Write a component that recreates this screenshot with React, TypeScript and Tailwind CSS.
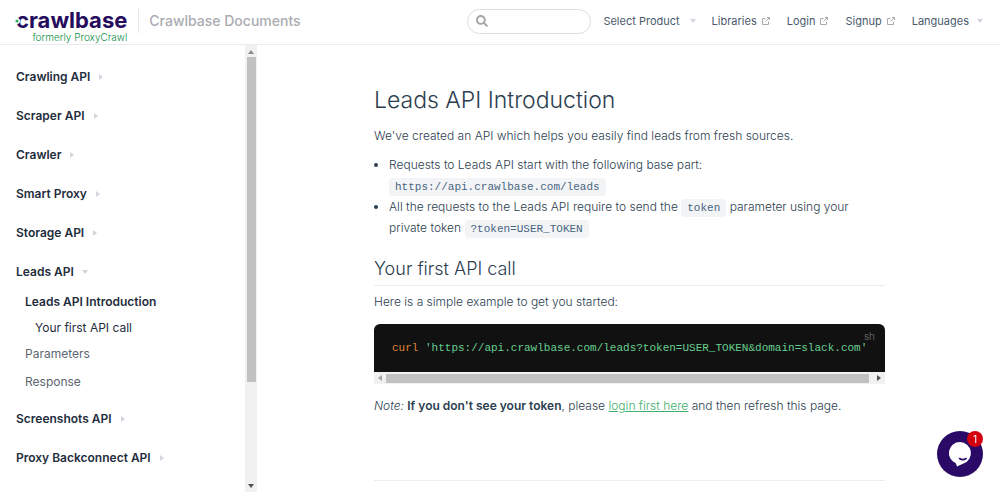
import { FaSearch } from 'react-icons/fa';

interface SidebarItem {
    title: string;
    open?: boolean;
}

const sidebarItems: SidebarItem[] = [
    { title: 'Crawling API' },
    { title: 'Scraper API' },
    { title: 'Crawler' },
    { title: 'Smart Proxy' },
    { title: 'Storage API' },
    { title: 'Leads API', open: true },
    { title: 'Screenshots API' },
    { title: 'Proxy Backconnect API' },
];

const navLinks = ['Libraries', 'Login', 'Signup'];

function Arrow({ direction, className }: { direction: 'up' | 'down' | 'left' | 'right'; className: string }) {
    const points = {
        up: '0,6 3,2 6,6',
        down: '0,1 6,1 3,5',
        left: '5,0 5,6 1,3',
        right: '1,0 1,6 5,3',
    };

    return (
        <svg viewBox="0 0 6 6" className={`w-1.5 h-1.5 shrink-0 ${className}`} fill="currentColor" aria-hidden="true">
            <polygon points={points[direction]} />
        </svg>
    );
}

function OutboundIcon() {
    return (
        <svg viewBox="0 0 10 10" className="w-2.5 h-2.5 shrink-0 text-[#aaaaaa]" fill="none" stroke="currentColor" aria-hidden="true">
            <path d="M4.500 2.500h-3v6h6v-3" />
            <path d="M6 1.500h2.500V4M8.500 1.500L4.500 5.500" />
        </svg>
    );
}

function Logo() {
    return (
        <a href="#home" className="flex flex-col items-end mt-[9px]">
            <span className="relative text-[22px] leading-5 font-bold text-[#260c5c]">
                crawlbase
                <svg viewBox="0 0 6 6" className="absolute -left-0.5 top-2 w-1.5 h-1.5" aria-hidden="true">
                    <circle cx="3" cy="3" r="3" fill="#fff" />
                    <circle cx="3" cy="3" r="1.6" fill="#2fae60" />
                </svg>
            </span>
            <span className="text-[10px] leading-[14px] font-light text-[#0f8f4a]">formerly ProxyCrawl</span>
        </a>
    );
}

function Header() {
    return (
        <header className="flex items-center h-[45px] shrink-0 pl-4 pr-[17px] border-b border-[#eaecef]">
            <Logo />
            <a href="#docs" className="ml-[11px] mb-0.5 pl-2.5 border-l border-gray-200 text-sm leading-6 font-medium text-[#aaacb2]">
                Crawlbase Documents
            </a>
            <div className="flex items-center gap-4 ml-auto mb-0.5 text-[11px] text-[#4b5a6c]">
                <label className="flex items-center w-[124px] h-[25px] -mr-1 px-2 rounded-full border border-[#dcdfe3]">
                    <FaSearch className="w-3 h-3 shrink-0 text-[#a6a6a6]" />
                    <input type="text" aria-label="Search" className="w-full min-w-0 pl-2 outline-none" />
                </label>
                <button type="button" className="flex items-center gap-2.5">
                    Select Product
                    <Arrow direction="down" className="text-gray-300" />
                </button>
                {navLinks.map(link => (
                    <a key={link} href={`#${link.toLowerCase()}`} className="flex items-center gap-1">
                        {link}
                        <OutboundIcon />
                    </a>
                ))}
                <button type="button" className="flex items-center gap-2">
                    Languages
                    <Arrow direction="down" className="text-gray-300" />
                </button>
            </div>
        </header>
    );
}

function Sidebar() {
    return (
        <aside className="flex w-[257px] shrink-0">
            <nav className="flex-1 overflow-hidden pt-3 pl-4 text-xs text-[#1f2d3d]">
                <ul>
                    {sidebarItems.map(item => (
                        <li key={item.title}>
                            <button type="button" className="flex items-center gap-2 h-[39px] font-semibold">
                                {item.title}
                                <Arrow direction={item.open ? 'down' : 'right'} className="text-gray-300" />
                            </button>
                            {item.open && (
                                <ul className="-mt-[3px] mb-[3px] pl-[9px]">
                                    <li>
                                        <a href="#introduction" className="flex items-center h-7 font-semibold">Leads API Introduction</a>
                                        <a href="#first-call" className="flex items-center h-6 pl-2.5">Your first API call</a>
                                    </li>
                                    <li>
                                        <a href="#parameters" className="flex items-center h-7 text-[#5d6670]">Parameters</a>
                                    </li>
                                    <li>
                                        <a href="#response" className="flex items-center h-7 text-[#5d6670]">Response</a>
                                    </li>
                                </ul>
                            )}
                        </li>
                    ))}
                </ul>
            </nav>
            <div className="flex flex-col items-center w-3 bg-[#f1f1f1]" aria-hidden="true">
                <div className="flex items-center h-3"><Arrow direction="up" className="text-[#8a8a8a]" /></div>
                <div className="w-[9px] flex-[325] bg-[#c1c1c1]" />
                <div className="flex-[98]" />
                <div className="flex items-center h-3"><Arrow direction="down" className="text-[#505050]" /></div>
            </div>
        </aside>
    );
}

function InlineCode({ children }: { children: string }) {
    return (
        <code className="px-1.5 py-[3px] rounded-sm bg-[#f3f4f5] font-['Liberation_Mono',monospace] text-[11px] leading-none text-[#476582]">
            {children}
        </code>
    );
}

function CodeBlock() {
    return (
        <div className="mt-3">
            <div className="relative px-[18px] py-4 rounded-t-md bg-[#111111]">
                <pre className="font-['Liberation_Mono',monospace] text-[11px] leading-4 text-[#67cf90] whitespace-pre">
                    <span className="text-[#e0843c]">curl</span>
                    {" 'https://api.crawlbase.com/leads?token=USER_TOKEN&domain=slack.com'"}
                </pre>
                <span className="absolute top-1 right-2.5 text-[10px] leading-4 text-[#767676]">sh</span>
            </div>
            <div className="flex items-center h-3 bg-[#f1f1f1]" aria-hidden="true">
                <div className="flex justify-center w-3"><Arrow direction="left" className="text-[#a3a3a3]" /></div>
                <div className="flex-1 h-[9px] mr-1 bg-[#c1c1c1]" />
                <div className="flex justify-center w-3"><Arrow direction="right" className="text-[#505050]" /></div>
            </div>
        </div>
    );
}

function ChatButton() {
    return (
        <button type="button" aria-label="Open chat" className="fixed right-[17px] bottom-[15px] w-[46px] h-[46px] rounded-full bg-[#2a0a66]">
            <svg viewBox="0 0 46 46" className="w-full h-full" aria-hidden="true">
                <path d="M23 11a11 11 0 0 1 3.500 21.400L20 35.500l-1.200-3.300A11 11 0 0 1 23 11z" fill="#fff" />
                <path d="M22.500 27.500q3.500 2.200 6.500 0" fill="none" stroke="#2a0a66" strokeWidth="1.600" strokeLinecap="round" />
            </svg>
            <span className="absolute top-0 right-0 w-4 h-4 rounded-full bg-[#d3000d] text-[10px] leading-4 text-white">1</span>
        </button>
    );
}

export default function App() {
    return (
        <div className="flex flex-col h-screen overflow-hidden bg-white font-['Inter','Liberation_Sans',sans-serif] text-xs text-[#3a4a5e]">
            <Header />
            <div className="flex flex-1 min-h-0">
                <Sidebar />
                <main className="flex-1 min-w-0 pl-[26px] pr-6 font-light text-[#2c3e50]">
                    <article className="max-w-[511px] mx-auto pt-[41px]">
                        <h1 className="text-[23px] leading-7">Leads API Introduction</h1>
                        <p className="mt-3 leading-5">We've created an API which helps you easily find leads from fresh sources.</p>
                        <ul className="mt-2 pl-[15px] list-disc leading-[21px]">
                            <li>
                                Requests to Leads API start with the following base part:
                                <br />
                                <InlineCode>https://api.crawlbase.com/leads</InlineCode>
                            </li>
                            <li>
                                All the requests to the Leads API require to send the <InlineCode>token</InlineCode> parameter using your
                                private token <InlineCode>?token=USER_TOKEN</InlineCode>
                            </li>
                        </ul>
                        <h2 className="mt-[19px] pb-1 border-b border-[#eaecef] text-lg leading-6">Your first API call</h2>
                        <p className="mt-1.5 leading-5">Here is a simple example to get you started:</p>
                        <CodeBlock />
                        <p className="mt-3 leading-5">
                            <em>Note:</em> <strong className="font-semibold">If you don't see your token</strong>, please{' '}
                            <a href="#login" className="text-[#3eaf6c] underline">login first here</a> and then refresh this page.
                        </p>
                        <hr className="mt-16 border-[#eaecef]" />
                    </article>
                </main>
            </div>
            <ChatButton />
        </div>
    );
}
